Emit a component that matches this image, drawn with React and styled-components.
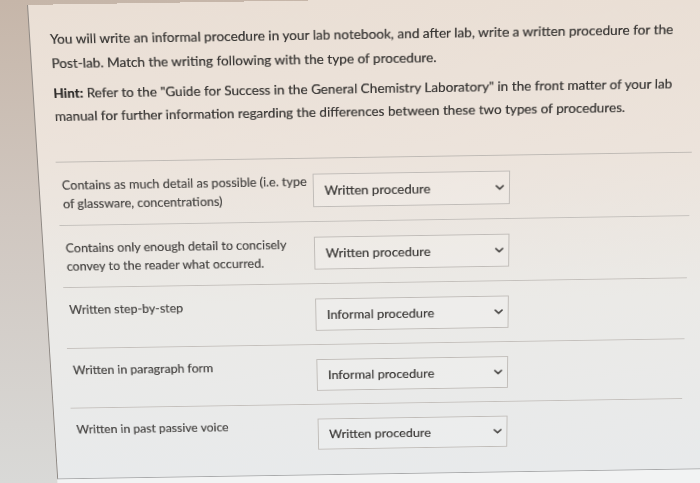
import React from 'react';
import styled, { createGlobalStyle } from 'styled-components';

const Global = createGlobalStyle`
  html, body { margin: 0; padding: 0; height: 100%; overflow: hidden; }
  body {
    background: linear-gradient(180deg, #c6b6a9 0%, #d0c7c0 45%, #d9d9d7 100%);
    font-family: Lato, "Open Sans", "Liberation Sans", sans-serif;
  }
`;

const Scene = styled.div`
  width: 760px;
  height: 570px;
  display: flex;
  flex-direction: column;
  transform-origin: 340px 0;
  transform: perspective(1000px) rotate(-0.9deg) rotateX(-8.7deg);
`;

const Panel = styled.main`
  margin-left: 27px;
  border-left: 1px solid #8e8883;
  border-bottom: 1px solid #a9aaab;
  padding: 23px 62px 13px 20px;
  background: linear-gradient(180deg, #eadfd5 0%, #ece3db 30%, #ebeae7 62%, #e8eaeb 100%);
`;

const Footer = styled.div`
  flex: 1;
  margin-left: 27px;
  background: #f2f3f3;
`;

const Para = styled.p`
  margin: 0 0 6.5px;
  font-size: 13.7px;
  line-height: 24.5px;
  color: #363432;
  text-shadow: 0 0 0.4px rgba(40, 38, 36, 0.6);
`;

const NoWrap = styled.span`
  white-space: nowrap;
`;

const Strong = styled.strong`
  font-weight: 700;
  color: #2c2a28;
`;

const Matches = styled.div`
  margin: 35px 0 0 -2px;
  border-top: 1px solid #bfbab5;
`;

const Row = styled.div`
  display: flex;
  align-items: flex-start;
  gap: 2px;
  height: 68px;
  box-sizing: border-box;
  padding: 14px 0 0 5px;
  border-bottom: 1px solid #c4c0bc;
  &:last-child { border-bottom: none; }
`;

const Label = styled.div`
  flex: 0 0 256px;
  font-size: 13px;
  line-height: 20px;
  color: #474543;
  text-shadow: 0 0 0.4px rgba(40, 38, 36, 0.5);
`;

const Select = styled.div`
  margin-top: 2px;
  width: 203px;
  height: 36px;
  box-sizing: border-box;
  border: 1px solid #c0bcb8;
  background: rgba(255, 255, 255, 0.16);
  display: flex;
  align-items: center;
  justify-content: space-between;
  padding: 0 5px 0 11px;
  font-size: 13.5px;
  color: #393735;
  text-shadow: 0 0 0.4px rgba(40, 38, 36, 0.5);
`;

const Chevron = () => (
  <svg width="9" height="6" viewBox="0 0 9 6" aria-hidden="true">
    <path d="M1 1.2 L4.5 4.6 L8 1.2" fill="none" stroke="#4a4846" strokeWidth="1.8" strokeLinecap="round" strokeLinejoin="round" />
  </svg>
);

const rows = [
  ['Contains as much detail as possible (i.e. type of glassware, concentrations)', 'Written procedure'],
  ['Contains only enough detail to concisely convey to the reader what  occurred.', 'Written procedure'],
  ['Written step-by-step', 'Informal procedure'],
  ['Written in paragraph form', 'Informal procedure'],
  ['Written in past passive voice', 'Written procedure'],
];

export default function App() {
  return (
    <>
      <Global />
      <Scene>
        <Panel>
          <Para>
            You will write an informal procedure in your lab notebook, and after lab, write a written procedure for the <NoWrap>Post-lab.</NoWrap> Match the writing following with the type of procedure.
          </Para>
          <Para>
            <Strong>Hint:</Strong> Refer to the "Guide for Success in the General Chemistry Laboratory" in the front matter of your lab manual for further information regarding the differences between these two types of procedures.
          </Para>
          <Matches>
            {rows.map(([label, value]) => (
              <Row key={label}>
                <Label>{label}</Label>
                <Select>
                  <span>{value}</span>
                  <Chevron />
                </Select>
              </Row>
            ))}
          </Matches>
        </Panel>
        <Footer />
      </Scene>
    </>
  );
}
